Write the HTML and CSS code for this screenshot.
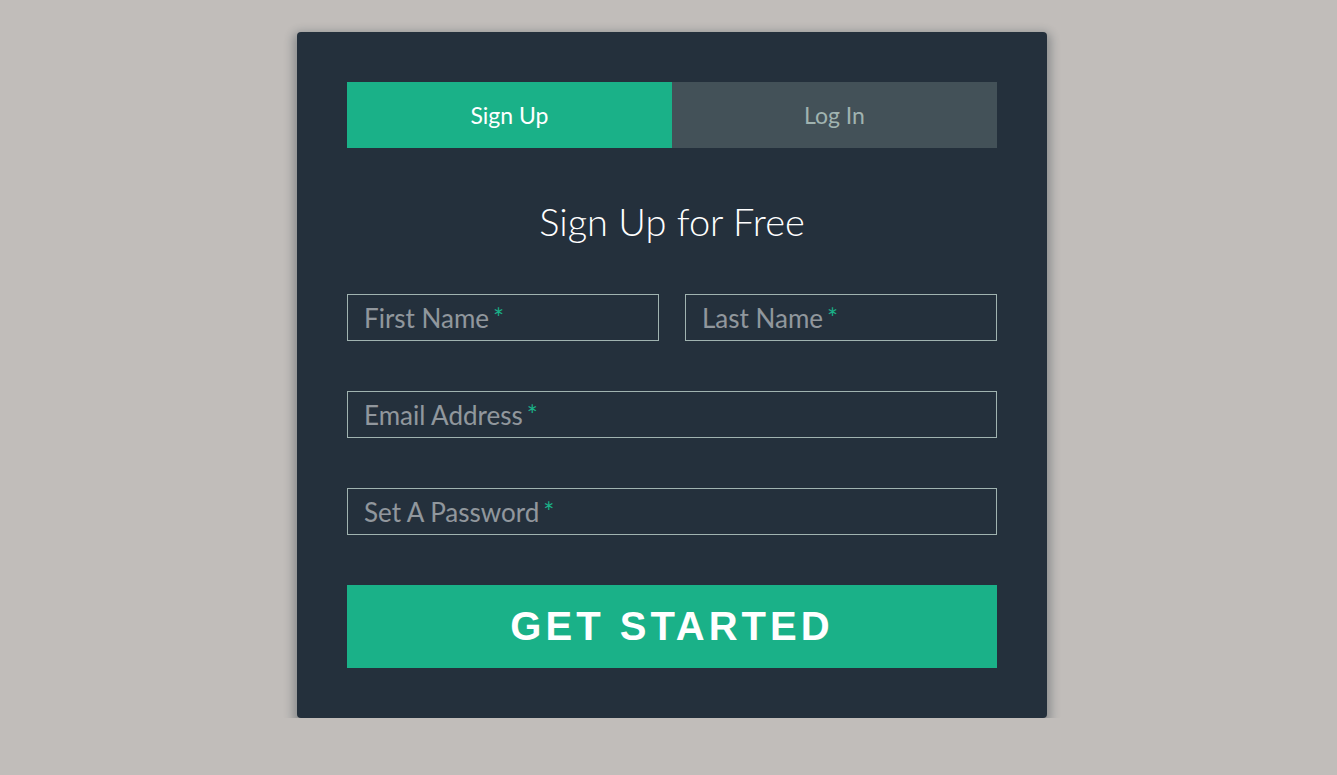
FILE: index.html
```html
<!DOCTYPE html>
<html lang="en">
<head>
  <meta charset="UTF-8">
  <meta name="viewport" content="width=device-width, initial-scale=1.0">
  <title>Sign Up</title>
  <link rel="stylesheet" href="styles.css">
</head>
<body>
<div class="form">
  <!-- Tabs -->
  <ul class="tab-group">
    <li class="tab active"><a href="#signup">Sign Up</a></li>
    <li class="tab"><a href="#login">Log In</a></li>
  </ul>

  <h1>Sign Up for Free</h1>

  <form id="signupForm">
    <div class="top-row">
      <div class="field-wrap">
        <label>First Name<span class="req">*</span></label>
        <input type="text" required>
      </div>
      <div class="field-wrap">
        <label>Last Name<span class="req">*</span></label>
        <input type="text" required>
      </div>
    </div>

    <div class="field-wrap">
      <label>Email Address<span class="req">*</span></label>
      <input type="email" required>
    </div>

    <div class="field-wrap">
      <label>Set A Password<span class="req">*</span></label>
      <input type="password" required>
    </div>

    <button type="submit" class="button">Get Started</button>
  </form>
</div>
</body>
</html>
```

FILE: styles.css
```css
* {
  box-sizing: border-box;
}

body {
  font-family: Lato, "Open Sans", sans-serif;
  margin: 0;
  padding: 0 0 0 7px;
  background-color: #c1bdba;
}

a {
  text-decoration: none;
}

.form {
  width: 750px;
  margin: 32px auto 0;
  padding: 50px;
  background-color: #24303c;
  border-radius: 4px;
  box-shadow: 0 4px 10px 4px rgba(19, 35, 47, 0.3);
}

/* Tabs */
.tab-group {
  list-style: none;
  margin: 0 0 48px;
  padding: 0;
  display: flex;
}

.tab {
  flex: 1;
}

.tab a {
  display: block;
  height: 66px;
  line-height: 66px;
  text-align: center;
  font-size: 23px;
  background-color: #435158;
  color: #a0b3b0;
}

.tab.active a {
  background-color: #1ab188;
  color: #fff;
}

h1 {
  text-align: center;
  color: #fff;
  font-weight: 300;
  font-size: 38px;
  line-height: 50px;
  margin: 0 0 48px;
}

/* Fields */
.top-row {
  display: flex;
  gap: 26px;
}

.top-row .field-wrap {
  flex: 1;
}

.field-wrap {
  position: relative;
  margin-bottom: 50px;
}

label {
  position: absolute;
  left: 17px;
  top: 1px;
  line-height: 47px;
  font-size: 26px;
  color: rgba(255, 255, 255, 0.5);
  pointer-events: none;
}

.req {
  margin-left: 4px;
  color: #1ab188;
}

input {
  display: block;
  width: 100%;
  height: 47px;
  padding: 5px 10px;
  font-size: 22px;
  background: none;
  border: 1px solid #a0b3b0;
  border-radius: 0;
  color: #fff;
}

.button {
  display: block;
  width: 100%;
  height: 83px;
  border: 0;
  border-radius: 0;
  background-color: #1ab188;
  color: #fff;
  font-family: "Liberation Sans", Arial, sans-serif;
  font-size: 40px;
  font-weight: bold;
  text-transform: uppercase;
  letter-spacing: 0.1em;
  cursor: pointer;
}
```
